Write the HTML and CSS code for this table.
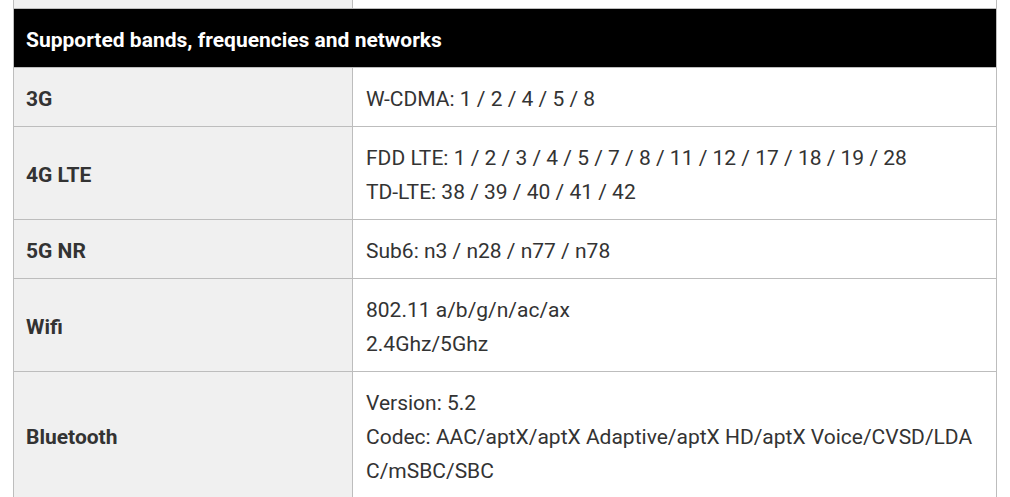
FILE: index.html
```html
<!DOCTYPE html>
<html lang="en">
<head>
<meta charset="utf-8">
<title>Specs</title>
<link rel="stylesheet" href="styles.css">
</head>
<body>
<table class="specs">
  <colgroup><col class="col-label"><col class="col-value"></colgroup>
  <tbody>
    <tr class="cut"><th class="label"></th><td class="value"></td></tr>
    <tr class="section"><th colspan="2">Supported bands, frequencies and networks</th></tr>
    <tr><th class="label">3G</th><td class="value">W-CDMA: 1 / 2 / 4 / 5 / 8</td></tr>
    <tr><th class="label">4G LTE</th><td class="value">FDD LTE: 1 / 2 / 3 / 4 / 5 / 7 / 8 / 11 / 12 / 17 / 18 / 19 / 28<br>TD-LTE: 38 / 39 / 40 / 41 / 42</td></tr>
    <tr><th class="label">5G NR</th><td class="value">Sub6: n3 / n28 / n77 / n78</td></tr>
    <tr><th class="label">Wifi</th><td class="value">802.11 a/b/g/n/ac/ax<br>2.4Ghz/5Ghz</td></tr>
    <tr><th class="label">Bluetooth</th><td class="value">Version: 5.2<br>Codec: AAC/aptX/aptX Adaptive/aptX HD/aptX Voice/CVSD/LDAC/mSBC/SBC</td></tr>
  </tbody>
</table>
</body>
</html>
```
FILE: styles.css
```css
html, body {
  margin: 0;
  padding: 0;
  background: #fff;
}
body {
  font-family: Roboto, "Liberation Sans", sans-serif;
  color: #333;
  overflow: hidden;
}
.specs {
  margin-left: 13px;
  width: 984px;
  table-layout: fixed;
  border-collapse: collapse;
  font-size: 21px;
  line-height: 34px;
}
.col-label { width: 339px; }
.specs th, .specs td {
  border: 1px solid #bdbdbd;
  padding: 14px 13px 10px 12px;
  text-align: left;
  vertical-align: middle;
  word-break: break-all;
}
.specs th.label {
  background: #f0f0f0;
  font-weight: 700;
  color: #333;
}
.specs td.value {
  background: #fff;
  font-weight: 400;
  padding-left: 13px;
  padding-right: 13px;
}
.specs tr.cut th, .specs tr.cut td {
  padding: 0;
  height: 8px;
  border-top: none;
  line-height: 0;
}
.specs tr.section th {
  background: #000;
  color: #fff;
  font-weight: 700;
}
```
